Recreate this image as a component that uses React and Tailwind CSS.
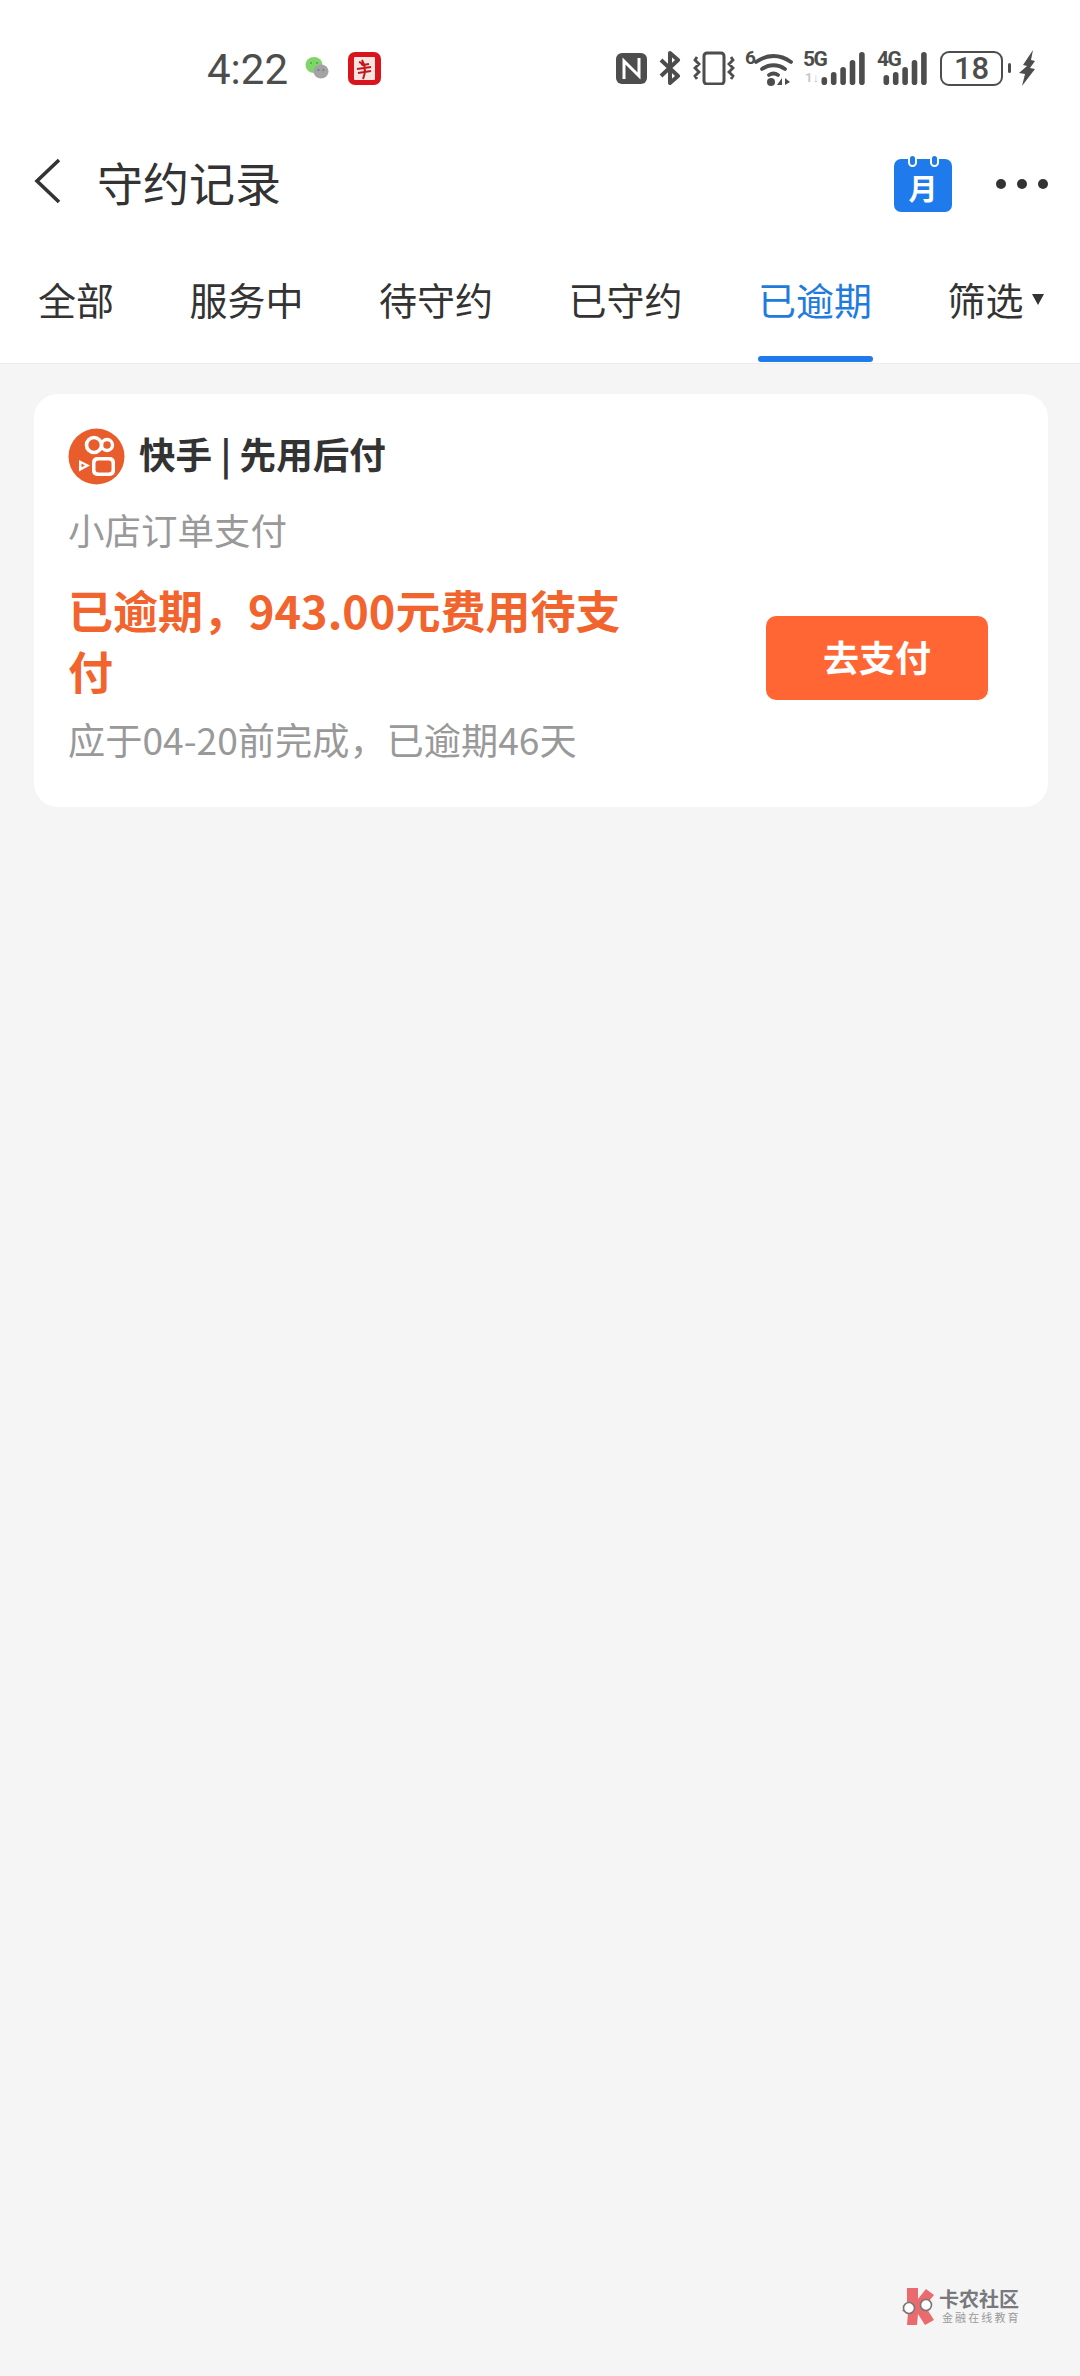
import React from 'react';

const FONT = '[font-family:"Noto_Sans_CJK_SC","Roboto",sans-serif]';

const tabs = [
  { label: '全部', width: 'w-[76px]' },
  { label: '服务中', width: 'w-[114px]' },
  { label: '待守约', width: 'w-[114px]' },
  { label: '已守约', width: 'w-[114px]' },
  { label: '已逾期', width: 'w-[114px]', active: true },
];

const Signal = ({ bars }) => (
  <svg width="44" height="34" viewBox="0 0 44 34" fill="#4d4d4d">
    {bars.map((h, i) => (
      <rect key={i} x={i * 9.4 + 0.5} y={34 - h} width="5.6" height={h} rx="2.8" />
    ))}
  </svg>
);

const StatusIcons = () => (
  <div className="flex items-center text-[#4d4d4d]">
    {/* nfc */}
    <svg width="31" height="31" viewBox="0 0 31 31" className="mr-[12px]">
      <rect width="31" height="31" rx="6" fill="#4d4d4d" />
      <path d="M8 26V8l15 15V5" fill="none" stroke="#fff" strokeWidth="3" />
    </svg>
    {/* bluetooth */}
    <svg width="22" height="34" viewBox="0 0 22 34" fill="none" stroke="#4d4d4d" strokeWidth="4" className="mr-[12px]">
      <path d="M2 9l17 16-8 7V2l8 7L2 25" strokeLinejoin="round" />
    </svg>
    {/* vibrate */}
    <svg width="42" height="34" viewBox="0 0 42 34" fill="none" stroke="#4d4d4d" className="mr-[10px]">
      <rect x="11" y="2" width="20" height="31" rx="3" strokeWidth="3" />
      <path d="M4 6l-2 3 4 4-4 4 4 4-4 4 2 3M38 6l2 3-4 4 4 4-4 4 4 4-2 3" strokeWidth="2.8" />
    </svg>
    {/* wifi 6 */}
    <div className="relative w-[48px] h-[36px] mr-[10px]">
      <span className="absolute left-0 -top-[2px] text-[19px] leading-[20px] font-bold [font-family:Roboto,sans-serif]">6</span>
      <svg width="48" height="36" viewBox="0 0 48 36">
        <path d="M11 12c11-8 24-8 35 0M17 19c7-5 16-5 23 0M24 25c3-2 6-2 9 0" fill="none" stroke="#4d4d4d" strokeWidth="3.8" strokeLinecap="round" />
        <circle cx="26" cy="32" r="4" fill="#4d4d4d" />
        <path d="M37 28v7h-5zM40 28v7l5-3z" fill="#4d4d4d" />
      </svg>
    </div>
    {/* 5G */}
    <div className="relative w-[62px] h-[36px] mr-[12px]">
      <span className="absolute left-0 -top-[1px] text-[21px] leading-[20px] tracking-[-1.5px] font-bold [font-family:Roboto,sans-serif]">5G</span>
      <span className="absolute left-[2px] top-[21px] text-[13px] leading-[14px] text-[#c8c8c8] font-bold [font-family:Roboto,sans-serif]">1↓</span>
      <div className="absolute right-0 top-[1px]">
        <Signal bars={[8, 13, 18, 25, 33]} />
      </div>
    </div>
    {/* 4G */}
    <div className="relative w-[50px] h-[36px] mr-[13px]">
      <span className="absolute left-0 -top-[1px] text-[21px] leading-[20px] tracking-[-1.5px] font-bold [font-family:Roboto,sans-serif]">4G</span>
      <div className="absolute right-0 top-[1px]">
        <Signal bars={[10, 13, 18, 25, 33]} />
      </div>
    </div>
    {/* battery */}
    <div className="w-[63px] h-[35px] border-[2.5px] border-[#4d4d4d] rounded-[9px] flex items-center justify-center text-[31px] leading-none [font-family:Roboto,sans-serif] font-medium mr-[5px]">
      18
    </div>
    <div className="w-[3px] h-[10px] bg-[#4d4d4d] rounded-sm mr-[7px]" />
    <svg width="18" height="36" viewBox="0 0 18 36" fill="#4d4d4d">
      <path d="M15 0L5 15l4 1-8 7 6 1-3 12 13-17-5-1 5-7-4-1z" />
    </svg>
  </div>
);

const WechatIcon = () => (
  <svg width="24" height="24" viewBox="0 0 24 24" className="mr-[19px]">
    <ellipse cx="9" cy="9" rx="8.5" ry="8" fill="#7fd56a" />
    <circle cx="6" cy="7" r="1" fill="#4fa63c" />
    <circle cx="12" cy="7" r="1" fill="#4fa63c" />
    <ellipse cx="16" cy="15.5" rx="7.5" ry="7" fill="#a3a3a6" />
    <circle cx="13.5" cy="14" r="1" fill="#77777a" />
    <circle cx="18.5" cy="14" r="1" fill="#77777a" />
  </svg>
);

const RedAppIcon = () => (
  <svg width="33" height="33" viewBox="0 0 33 33">
    <rect width="33" height="33" rx="7" fill="#d8141c" />
    <rect x="6" y="5" width="21" height="23" rx="1" fill="#f6e4e0" />
    <path d="M11 10c4 1 2 3 4 3l6-1M9 17l14-2M10 21l13-2M14 8c3 5 4 12 1 19" fill="none" stroke="#c4141c" strokeWidth="2" />
  </svg>
);

const KwaiLogo = () => (
  <svg width="57" height="57" viewBox="0 0 57 57" className="shrink-0">
    <circle cx="28.5" cy="28.5" r="28" fill="#e85d2b" />
    <circle cx="26" cy="17" r="7.5" fill="none" stroke="#fff" strokeWidth="3.6" />
    <circle cx="39" cy="17" r="5.5" fill="none" stroke="#fff" strokeWidth="3.4" />
    <rect x="24" y="29" width="23" height="19" rx="5" fill="#fff" />
    <rect x="27.5" y="32.5" width="16" height="12" rx="3" fill="#e85d2b" />
    <path d="M11 32l11 5.5-11 6z" fill="#fff" />
    <path d="M13.5 35.6l3.5 1.8-3.5 1.9z" fill="#e85d2b" />
  </svg>
);

const CalendarIcon = () => (
  <div className="relative w-[58px] h-[58px] mr-[44px] mt-[4px]">
    <div className="absolute left-0 bottom-0 w-[58px] h-[53px] bg-[#1f7bec] rounded-[7px] flex items-center justify-center text-white text-[29px] font-bold leading-none pt-[4px]">
      月
    </div>
    <div className="absolute left-[14px] top-0 w-[9px] h-[13px] rounded-full bg-[#1f7bec] border-2 border-white" />
    <div className="absolute right-[13px] top-0 w-[9px] h-[13px] rounded-full bg-[#1f7bec] border-2 border-white" />
  </div>
);

const Watermark = () => (
  <div className="absolute left-[900px] top-[2287px] flex items-center">
    <svg width="36" height="38" viewBox="0 0 36 38">
      <path d="M7 1h11v11l8-10 8 6-9 11 9 14-9 5-7-11-1 11H7l1-12-6-2 5-8z" fill="#e96b6e" />
      <circle cx="9" cy="21" r="5.5" fill="#fff" stroke="#777" strokeWidth="1.6" />
      <circle cx="26" cy="18" r="5.5" fill="#fff" stroke="#777" strokeWidth="1.6" />
    </svg>
    <div className="ml-[3px] flex flex-col">
      <span className="text-[20px] leading-[20px] font-bold text-[#77797c]">卡农社区</span>
      <span className="ml-[3px] mt-[1px] text-[11px] leading-[14px] tracking-[2.1px] text-[#9a9a9a]">金融在线教育</span>
    </div>
  </div>
);

export default function App() {
  return (
    <div className={`relative w-[1080px] min-h-[2376px] bg-[#f5f5f5] ${FONT}`}>
      <div className="bg-white border-b border-[#ececec]">
        {/* status bar */}
        <div className="h-[149px] flex items-start justify-between pl-[207px] pr-[44px] pt-[45px]">
          <div className="flex items-center h-[46px]">
            <span className="mt-[4px] text-[42px] leading-none text-[#4d4d4d] [font-family:Roboto,sans-serif] w-[98px]">4:22</span>
            <WechatIcon />
            <RedAppIcon />
          </div>
          <div className="h-[46px] flex items-center">
            <StatusIcons />
          </div>
        </div>

        {/* header */}
        <div className="h-[64px] flex items-center justify-between">
          <div className="flex items-center">
            <svg width="27" height="46" viewBox="0 0 27 46" fill="none" stroke="#333" strokeWidth="3.6" className="ml-[34px]">
              <path d="M25 2L3 23l22 21" />
            </svg>
            <span className="ml-[36px] text-[46px] leading-none text-[#333]">守约记录</span>
          </div>
          <div className="flex items-center">
            <CalendarIcon />
            <div className="flex gap-[11px] mr-[32px] mt-[5px]">
              <span className="w-[10px] h-[10px] rounded-full bg-[#333]" />
              <span className="w-[10px] h-[10px] rounded-full bg-[#333]" />
              <span className="w-[10px] h-[10px] rounded-full bg-[#333]" />
            </div>
          </div>
        </div>

        {/* tabs */}
        <div className="mt-[55px] h-[95px] flex pl-[38px] gap-[75.5px]">
          {tabs.map((tab) => (
            <div key={tab.label} className={`relative ${tab.width} shrink-0 text-[38px] leading-[52px] whitespace-nowrap pt-[5px] ${tab.active ? 'text-[#1f7bdc]' : 'text-[#333]'}`}>
              {tab.label}
              {tab.active && <div className="absolute left-0 bottom-[1px] h-[6px] rounded-full bg-[#1f7bec] w-[115px]" />}
            </div>
          ))}
          <div className="pt-[5px] h-[57px] flex items-center text-[38px] leading-[52px] whitespace-nowrap text-[#333]">
            筛选
            <span className="ml-[8px] w-0 h-0 border-x-[6.5px] border-x-transparent border-t-[11px] border-t-[#333]" />
          </div>
        </div>
      </div>

      {/* order card */}
      <div className="mx-[34px] mt-[30px] w-[1014px] h-[413px] bg-white rounded-[24px] px-[34px] pt-[34px]">
        <div className="flex items-center gap-[14px]">
          <KwaiLogo />
          <span className="mb-[5px] text-[36.6px] leading-none font-bold text-[#333]">快手 | 先用后付</span>
        </div>
        <div className="mt-[20px] text-[36.5px] leading-[50px] text-[#999]">小店订单支付</div>
        <div className="flex items-start justify-between mt-[24px]">
          <div className="w-[580px]">
            <div className="text-[45px] leading-[61px] font-bold text-[#f2642e]">已逾期，943.00元费用待支付</div>
            <div className="mt-[13px] text-[37.2px] leading-[50px] text-[#999]">应于04-20前完成，已逾期46天</div>
          </div>
          <button className="w-[222px] h-[84px] mr-[26px] mt-[37px] pb-[4px] bg-[#ff6633] rounded-[10px] text-white text-[36px] font-bold">去支付</button>
        </div>
      </div>

      <Watermark />
    </div>
  );
}
